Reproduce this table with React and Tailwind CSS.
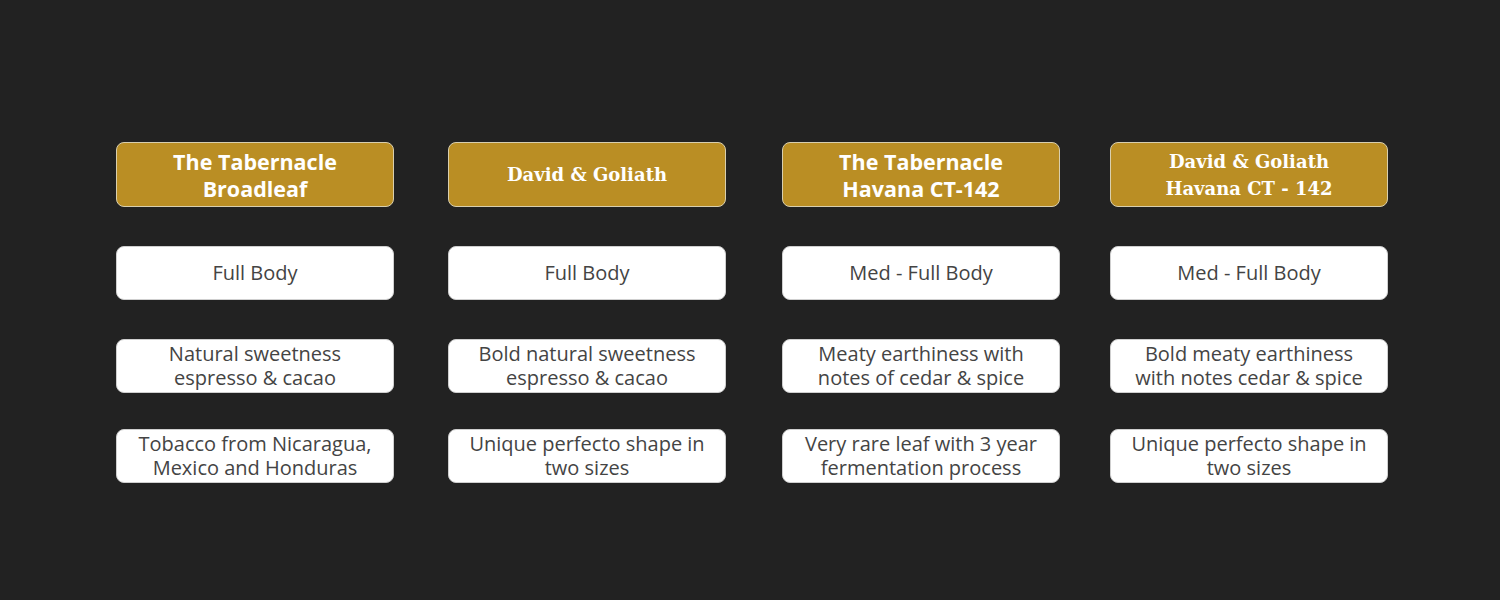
import React from "react";

const columns = [
  {
    title: ["The Tabernacle", "Broadleaf"],
    serif: false,
    ml: "ml-0",
    items: ["Full Body", ["Natural sweetness", "espresso & cacao"], ["Tobacco from Nicaragua,", "Mexico and Honduras"]],
  },
  {
    title: ["David & Goliath"],
    serif: true,
    ml: "ml-[54px]",
    items: ["Full Body", ["Bold natural sweetness", "espresso & cacao"], ["Unique perfecto shape in", "two sizes"]],
  },
  {
    title: ["The Tabernacle", "Havana CT-142"],
    serif: false,
    ml: "ml-[56px]",
    items: ["Med - Full Body", ["Meaty earthiness with", "notes of cedar & spice"], ["Very rare leaf with 3 year", "fermentation process"]],
  },
  {
    title: ["David & Goliath", "Havana CT - 142"],
    serif: true,
    ml: "ml-[50px]",
    items: ["Med - Full Body", ["Bold meaty earthiness", "with notes cedar & spice"], ["Unique perfecto shape in", "two sizes"]],
  },
];

const Lines = ({ text }) =>
  (Array.isArray(text) ? text : [text]).map((t, i) => <div key={i}>{t}</div>);

export default function App() {
  return (
    <div className="w-[1500px] h-[600px] bg-[#222222] flex pl-[116px] pt-[142px] font-['Open_Sans',sans-serif]">
      {columns.map((col, i) => (
        <div key={i} className={`w-[278px] flex flex-col ${col.ml}`}>
          {/* header */}
          <div
            className={`h-[65px] rounded-[8px] border border-[#d9cfae] bg-[#ba8e24] text-white flex flex-col items-center justify-center text-center leading-[27px] ${
              col.serif
                ? "font-['DejaVu_Serif',serif] font-bold text-[18px]"
                : "font-bold text-[21.5px]"
            }`}
          >
            <Lines text={col.title} />
          </div>

          {/* body cells */}
          <div className="mt-[39px] h-[54px] rounded-[8px] border border-[#cfcfcf] bg-white text-[#444] text-[20px] leading-[24px] flex flex-col items-center justify-center text-center">
            <Lines text={col.items[0]} />
          </div>
          <div className="mt-[39px] h-[54px] rounded-[8px] border border-[#cfcfcf] bg-white text-[#444] text-[20px] leading-[24px] flex flex-col items-center justify-center text-center">
            <Lines text={col.items[1]} />
          </div>
          <div className="mt-[36px] h-[54px] rounded-[8px] border border-[#cfcfcf] bg-white text-[#444] text-[20px] leading-[24px] flex flex-col items-center justify-center text-center">
            <Lines text={col.items[2]} />
          </div>
        </div>
      ))}
    </div>
  );
}
